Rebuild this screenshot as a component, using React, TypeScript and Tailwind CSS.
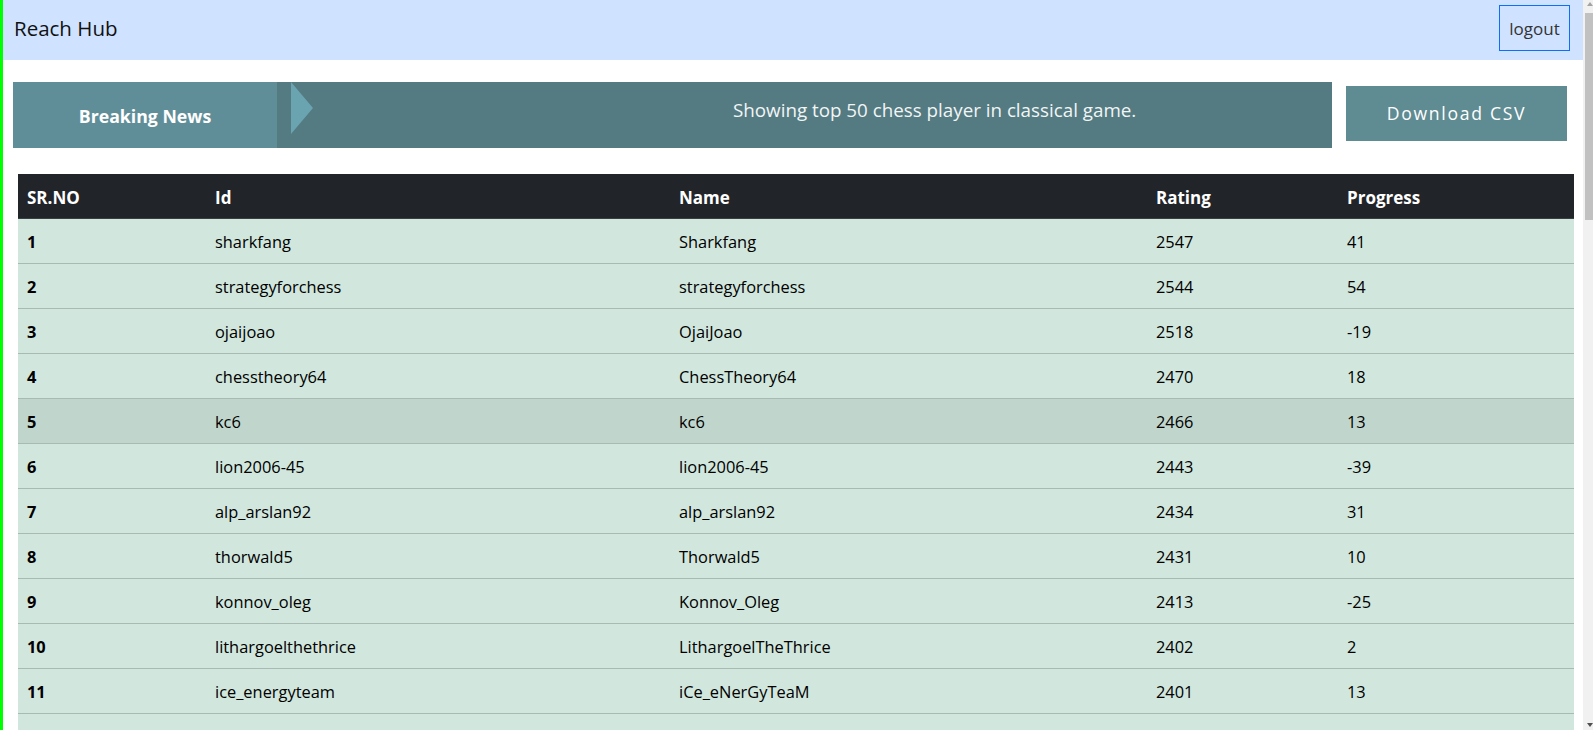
import React from 'react';

type Player = { id: string; name: string; rating: number; progress: number };

const players: Player[] = [
  { id: 'sharkfang', name: 'Sharkfang', rating: 2547, progress: 41 },
  { id: 'strategyforchess', name: 'strategyforchess', rating: 2544, progress: 54 },
  { id: 'ojaijoao', name: 'OjaiJoao', rating: 2518, progress: -19 },
  { id: 'chesstheory64', name: 'ChessTheory64', rating: 2470, progress: 18 },
  { id: 'kc6', name: 'kc6', rating: 2466, progress: 13 },
  { id: 'lion2006-45', name: 'lion2006-45', rating: 2443, progress: -39 },
  { id: 'alp_arslan92', name: 'alp_arslan92', rating: 2434, progress: 31 },
  { id: 'thorwald5', name: 'Thorwald5', rating: 2431, progress: 10 },
  { id: 'konnov_oleg', name: 'Konnov_Oleg', rating: 2413, progress: -25 },
  { id: 'lithargoelthethrice', name: 'LithargoelTheThrice', rating: 2402, progress: 2 },
  { id: 'ice_energyteam', name: 'iCe_eNerGyTeaM', rating: 2401, progress: 13 },
  { id: 'dr_knightfighter', name: 'Dr_KnightFighter', rating: 2398, progress: 7 },
];

const Navbar: React.FC = () => (
  <nav className="h-[60px] bg-[#cfe2ff] flex items-center justify-between pl-[11px] pr-[13px] pb-[4px]">
    <span className="text-[20.5px] text-[#111] leading-none">Reach Hub</span>
    <button className="w-[71px] h-[46px] border border-[#0d6efd] text-[17px] text-[#333] leading-none">
      logout
    </button>
  </nav>
);

const NewsBar: React.FC = () => (
  <div className="flex items-start mt-[22px] pl-[10px]">
    <div className="w-[1319px] h-[66px] flex bg-[#547a82]">
      <div className="w-[264px] h-full bg-[#608e98] flex items-center justify-center text-white font-bold text-[17.7px] pt-[2px]">
        Breaking News
      </div>
      <div className="flex-1 flex items-start">
        <svg className="ml-[14px] shrink-0" width="22" height="52" viewBox="0 0 22 52">
          <polygon points="0,0 22,26 0,52" fill="#6aa4b0" />
        </svg>
        <span className="ml-[420px] mt-[15px] leading-[26px] text-[18.8px] text-[#f2f5f5]">
          Showing top 50 chess player in classical game.
        </span>
      </div>
    </div>
    <button className="ml-[14px] mt-[4px] w-[221px] h-[55px] bg-[#5f8b93] text-white text-[17.6px] tracking-[1.7px]">
      Download CSV
    </button>
  </div>
);

const PlayerTable: React.FC = () => (
  <div className="mt-[26px] ml-[15px] w-[1556px]">
    <table className="w-full table-fixed border-collapse text-[16.4px]">
      <colgroup>
        <col className="w-[189px]" />
        <col className="w-[464px]" />
        <col className="w-[477px]" />
        <col className="w-[191px]" />
        <col className="w-[235px]" />
      </colgroup>
      <thead>
        <tr className="h-[44px] bg-[#212529] text-white text-left text-[17px] border-b border-[#3a3f44]">
          <th className="pl-[9px] pt-[4px] font-bold">SR.NO</th>
          <th className="pl-[8px] pt-[4px] font-bold">Id</th>
          <th className="pl-[8px] pt-[4px] font-bold">Name</th>
          <th className="pl-[8px] pt-[4px] font-bold">Rating</th>
          <th className="pl-[8px] pt-[4px] font-bold">Progress</th>
        </tr>
      </thead>
      <tbody>
        {players.map((p, i) => (
          <tr
            key={p.id}
            className={`h-[45px] border-b border-[#a9bab2] text-black ${i === 4 ? 'bg-[#c0d6cc]' : 'bg-[#d1e7dd]'}`}
          >
            <td className="pl-[9px] pt-[3px] font-bold">{i + 1}</td>
            <td className="pl-[8px] pt-[3px]">{p.id}</td>
            <td className="pl-[8px] pt-[3px]">{p.name}</td>
            <td className="pl-[8px] pt-[3px]">{p.rating}</td>
            <td className="pl-[8px] pt-[3px]">{p.progress}</td>
          </tr>
        ))}
      </tbody>
    </table>
  </div>
);

const FakeScrollbar: React.FC = () => (
  <div className="w-[10px] h-full bg-[#f1f1f1] flex flex-col shrink-0">
    <svg className="ml-[4px] mt-[2px]" width="6" height="5" viewBox="0 0 6 5">
      <polygon points="3,0 6,4 0,4" fill="#a3a3a3" />
    </svg>
    <div className="ml-[2px] mt-[6px] w-[8px] h-[207px] bg-[#c1c1c1]" />
    <div className="flex-1" />
    <svg className="ml-[4px] mb-[2px]" width="6" height="5" viewBox="0 0 6 5">
      <polygon points="0,0 6,0 3,4" fill="#505050" />
    </svg>
  </div>
);

const App: React.FC = () => {
  return (
    <div className="h-[730px] w-[1593px] flex overflow-hidden bg-white" style={{ fontFamily: '"Open Sans", "Noto Sans", sans-serif' }}>
      <div className="w-[3px] h-full bg-[#00ff00] shrink-0" />
      <main className="flex-1 min-w-0 h-full">
        <Navbar />
        <NewsBar />
        <PlayerTable />
      </main>
      <FakeScrollbar />
    </div>
  );
};

export default App;
